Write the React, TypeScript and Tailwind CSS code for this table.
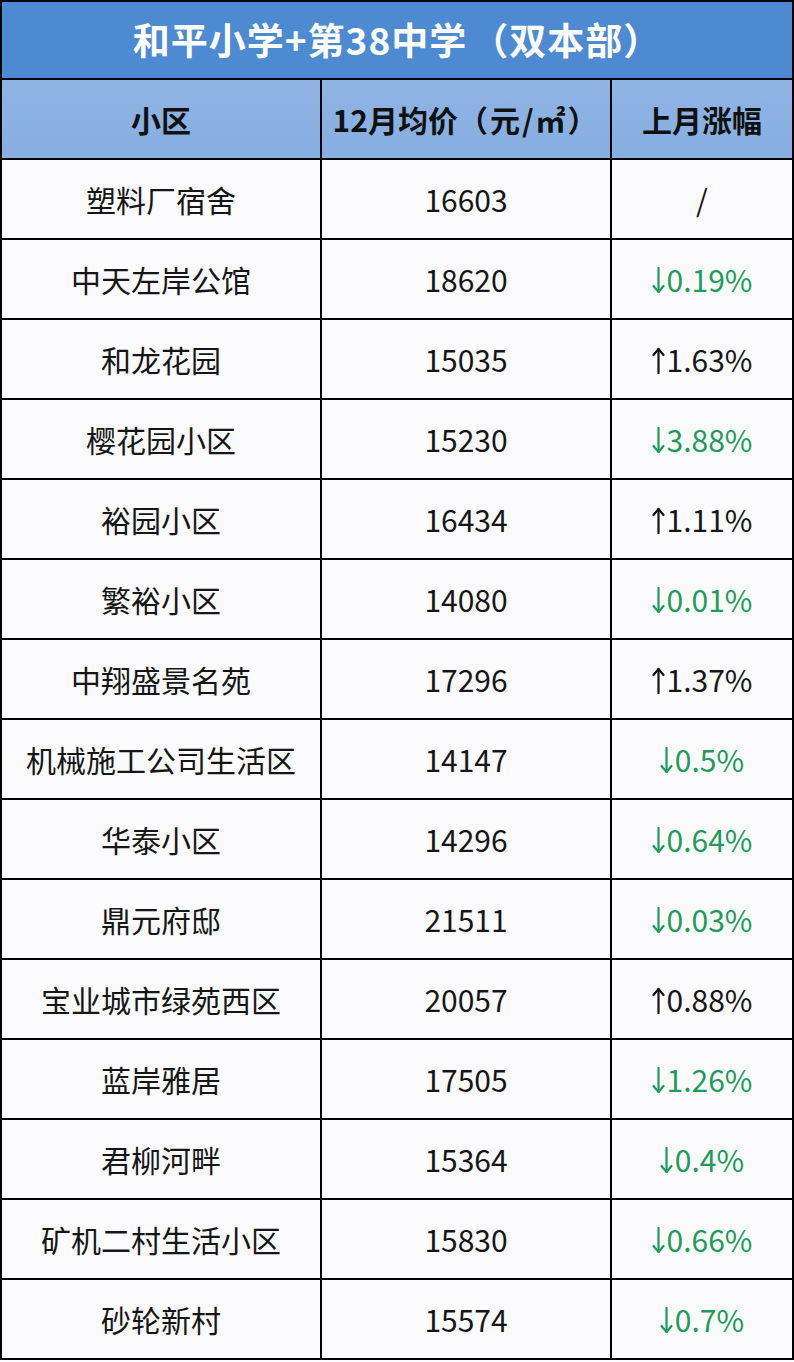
import React from 'react';

type Row = { name: string; price: string; change: string; dir: 'up' | 'down' | 'none' };

const ROWS: Row[] = [
  { name: '塑料厂宿舍', price: '16603', change: '/', dir: 'none' },
  { name: '中天左岸公馆', price: '18620', change: '0.19%', dir: 'down' },
  { name: '和龙花园', price: '15035', change: '1.63%', dir: 'up' },
  { name: '樱花园小区', price: '15230', change: '3.88%', dir: 'down' },
  { name: '裕园小区', price: '16434', change: '1.11%', dir: 'up' },
  { name: '繁裕小区', price: '14080', change: '0.01%', dir: 'down' },
  { name: '中翔盛景名苑', price: '17296', change: '1.37%', dir: 'up' },
  { name: '机械施工公司生活区', price: '14147', change: '0.5%', dir: 'down' },
  { name: '华泰小区', price: '14296', change: '0.64%', dir: 'down' },
  { name: '鼎元府邸', price: '21511', change: '0.03%', dir: 'down' },
  { name: '宝业城市绿苑西区', price: '20057', change: '0.88%', dir: 'up' },
  { name: '蓝岸雅居', price: '17505', change: '1.26%', dir: 'down' },
  { name: '君柳河畔', price: '15364', change: '0.4%', dir: 'down' },
  { name: '矿机二村生活小区', price: '15830', change: '0.66%', dir: 'down' },
  { name: '砂轮新村', price: '15574', change: '0.7%', dir: 'down' },
];

const font = "font-['Noto_Sans_CJK_SC',sans-serif]";
const cell = 'flex items-center justify-center border-r-2 border-b-2 border-black';

function Arrow({ up }: { up: boolean }) {
  return (
    <svg width="13" height="27" viewBox="0 0 13 27" className="mr-[2px] mt-[2px]" fill="none" stroke="currentColor" strokeWidth="2.2" strokeLinecap="round" strokeLinejoin="round">
      {up ? (
        <>
          <path d="M6.5 2 V26" />
          <path d="M1.5 8 L6.5 2 L11.5 8" />
        </>
      ) : (
        <>
          <path d="M6.5 1 V25" />
          <path d="M1.5 19 L6.5 25 L11.5 19" />
        </>
      )}
    </svg>
  );
}

export default function App() {
  return (
    <div className={`w-[794px] h-[1362px] bg-[#fbfbfd] ${font}`}>
      <div className="h-[80px] flex items-center justify-center bg-[#4e8ad2] border-2 border-black text-white text-[37px] font-bold tracking-[1px]">
        和平小学+第38中学<span className="ml-[4px]">（双本部）</span>
      </div>

      <div className="grid grid-cols-[322px_290px_182px] h-[80px] bg-gradient-to-b from-[#8fb4e4] to-[#86aee0] text-[30px] font-bold text-[#111]">
        <div className={`${cell} border-l-2`}>小区</div>
        <div className={cell}>
          12月均价<span className="tracking-[2px]">（元/㎡）</span>
        </div>
        <div className={cell}>上月涨幅</div>
      </div>

      {ROWS.map((r) => (
        <div key={r.name} className="grid grid-cols-[322px_290px_182px] h-[80px] text-[30px] text-[#161616]">
          <div className={`${cell} border-l-2`}>{r.name}</div>
          <div className={cell}>{r.price}</div>
          <div className={`${cell} ${r.dir === 'down' ? 'text-[#1e9c5c]' : ''}`}>
            {r.dir !== 'none' && <Arrow up={r.dir === 'up'} />}
            {r.change}
          </div>
        </div>
      ))}
    </div>
  );
}
